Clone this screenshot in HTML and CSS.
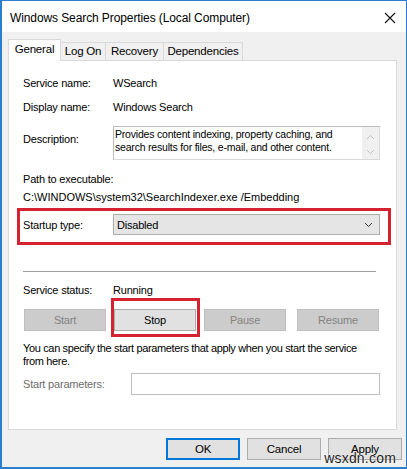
FILE: index.html
```html
<!DOCTYPE html>
<html>
<head>
<meta charset="utf-8">
<link rel="stylesheet" href="styles.css">
</head>
<body>
<div class="window">
  <div class="titlebar">
    <span class="title">Windows Search Properties (Local Computer)</span>
    <svg class="close" width="12" height="12" viewBox="0 0 12 12"><path d="M1 1L11 11M11 1L1 11" stroke="#111" stroke-width="1.1" fill="none"/></svg>
  </div>
  <div class="client">
    <div class="tabs">
      <div class="tab active">General</div>
      <div class="tab">Log On</div>
      <div class="tab">Recovery</div>
      <div class="tab">Dependencies</div>
    </div>
    <div class="panel">
      <div class="row r1"><span class="lbl">Service name:</span><span>WSearch</span></div>
      <div class="row r2"><span class="lbl">Display name:</span><span>Windows Search</span></div>
      <div class="row desc-row">
        <span class="lbl desc-lbl">Description:</span>
        <div class="descbox">
          <div class="desctext">Provides content indexing, property caching, and search results for files, e-mail, and other content.</div>
          <div class="scroll">
            <svg width="9" height="6" viewBox="0 0 9 6"><path d="M1 5L4.5 1.5L8 5" stroke="#c4c4c4" fill="none"/></svg>
            <svg width="9" height="6" viewBox="0 0 9 6"><path d="M1 1L4.5 4.5L8 1" stroke="#c4c4c4" fill="none"/></svg>
          </div>
        </div>
      </div>
      <div class="path">
        <div>Path to executable:</div>
        <div class="pathval">C:\WINDOWS\system32\SearchIndexer.exe /Embedding</div>
      </div>
      <div class="startup">
        <span class="lbl">Startup type:</span>
        <div class="select">
          <span>Disabled</span>
          <svg width="9" height="6" viewBox="0 0 9 6"><path d="M1 1L4.5 4.5L8 1" stroke="#333" fill="none"/></svg>
        </div>
      </div>
      <div class="sep"></div>
      <div class="row status"><span class="lbl">Service status:</span><span>Running</span></div>
      <div class="btnrow">
        <div class="btn disabled">Start</div>
        <div class="btn stop">Stop</div>
        <div class="btn disabled">Pause</div>
        <div class="btn disabled resume">Resume</div>
      </div>
      <div class="note">You can specify the start parameters that apply when you start the service from here.</div>
      <div class="params">
        <span class="lbl gray">Start parameters:</span>
        <div class="input"></div>
      </div>
    </div>
    <div class="footer">
      <div class="btn fbtn ok">OK</div>
      <div class="btn fbtn">Cancel</div>
      <div class="btn fbtn">Apply</div>
    </div>
    <span class="watermark">wsxdn.com</span>
  </div>
</div>
</body>
</html>
```
FILE: styles.css
```css
html, body {
  margin: 0;
  padding: 0;
  background: #ffffff;
}
body {
  font-family: "Liberation Sans", Arial, sans-serif;
  font-size: 11px;
  letter-spacing: -0.2px;
  color: #000;
}
.window {
  width: 407px;
  height: 469px;
  box-sizing: border-box;
  border: 1px solid #2a7fd0;
  border-left-width: 2px;
  border-bottom-width: 2px;
  display: flex;
  flex-direction: column;
  background: #f0f0f0;
}
.titlebar {
  height: 31px;
  background: #fff;
  display: flex;
  align-items: center;
  justify-content: space-between;
  padding: 0 9px 0 8px;
}
.title {
  font-size: 12px;
  letter-spacing: -0.1px;
  color: #000;
  margin-top: 2px;
}
.close { margin-right: 1px; margin-top: 2px; }
.client {
  flex: 1;
  position: relative;
  padding: 7px 0 0 6px;
}
.tabs {
  display: flex;
  height: 21px;
  align-items: flex-end;
  position: relative;
  z-index: 1;
}
.tab {
  height: 18px;
  box-sizing: border-box;
  border: 1px solid #d9d9d9;
  border-bottom: none;
  border-left: none;
  line-height: 17px;
  background: #f0f0f0;
  text-align: center;
  white-space: nowrap;
  font-size: 11.5px;
}
.tab.active {
  height: 22px;
  margin-bottom: -1px;
  background: #fff;
  border-left: 1px solid #d9d9d9;
  line-height: 18px;
  width: 53px;
}
.tab:nth-child(2) { width: 45px; }
.tab:nth-child(3) { width: 58px; }
.tab:nth-child(4) { width: 79px; }
.panel {
  width: 389px;
  height: 370px;
  box-sizing: border-box;
  background: #fff;
  border: 1px solid #d9d9d9;
  padding: 15px 16px 0 14px;
}
.row {
  display: flex;
  line-height: 15px;
}
.lbl {
  width: 90px;
  flex: none;
}
.r2 { margin-top: 9px; }
.desc-row { margin-top: 11px; }
.desc-lbl { padding-top: 6px; }
.descbox {
  flex: 1;
  height: 34px;
  box-sizing: border-box;
  border: 1px solid #d9d9d9;
  border-top-color: #bcbcbc;
  border-left-color: #bcbcbc;
  display: flex;
}
.desctext {
  flex: 1;
  padding: 1px 0 0 1px;
  line-height: 13px;
  font-size: 10.5px;
  letter-spacing: -0.2px;
}
.scroll {
  width: 17px;
  background: #f0f0f0;
  display: flex;
  flex-direction: column;
  justify-content: space-between;
  align-items: center;
  padding: 7px 0 4px;
  box-sizing: border-box;
}
.path {
  margin-top: 10px;
  line-height: 18px;
}
.pathval { letter-spacing: 0; }
.startup {
  margin: 2px -11px 0 -6px;
  border: 3px solid #d42230;
  padding: 3px 8px 7px 3px;
  display: flex;
  align-items: center;
}
.select {
  flex: 1;
  height: 21px;
  box-sizing: border-box;
  background: #e5e5e5;
  border: 1px solid #adadad;
  display: flex;
  align-items: center;
  justify-content: space-between;
  padding: 0 6px 0 3px;
}
.sep {
  height: 1px;
  background: #a0a0a0;
  margin: 26px 4px 0 0;
}
.status { margin-top: 11px; }
.btnrow {
  display: flex;
  margin-top: 2px;
  padding-left: 1px;
  gap: 8px;
}
.btn {
  width: 82px;
  height: 22px;
  box-sizing: border-box;
  border: 1px solid #adadad;
  background: #e1e1e1;
  text-align: center;
  line-height: 20px;
  position: relative;
}
.btn.disabled {
  background: #cccccc;
  border-color: #bfbfbf;
  color: #838383;
}
.btn.resume { margin-left: 3px; }
.btnrow .btn { margin-top: 9px; }
.stop::after {
  content: "";
  position: absolute;
  left: -4px;
  right: -5px;
  top: -12px;
  bottom: -7px;
  border: 3px solid #d42230;
}
.note {
  margin-top: 11px;
  line-height: 13px;
  padding-right: 6px;
  letter-spacing: -0.35px;
}
.params {
  display: flex;
  align-items: center;
  margin-top: 5px;
}
.gray { color: #6d6d6d; width: 108px; }
.input {
  flex: 1;
  height: 22px;
  box-sizing: border-box;
  border: 1px solid #bfbfbf;
  background: #fff;
}
.footer {
  display: flex;
  justify-content: flex-end;
  gap: 7px;
  padding-right: 4px;
  margin-top: 8px;
}
.fbtn {
  width: 74px;
  height: 22px;
  line-height: 20px;
  font-size: 11.5px;
}
.ok {
  border: 2px solid #0078d7;
  line-height: 18px;
}
.watermark {
  position: absolute;
  right: 10px;
  bottom: 1px;
  font-size: 14px;
  color: #222;
  -webkit-text-stroke: 0.6px #fff;
  paint-order: stroke fill;
  letter-spacing: 0.2px;
}
```
